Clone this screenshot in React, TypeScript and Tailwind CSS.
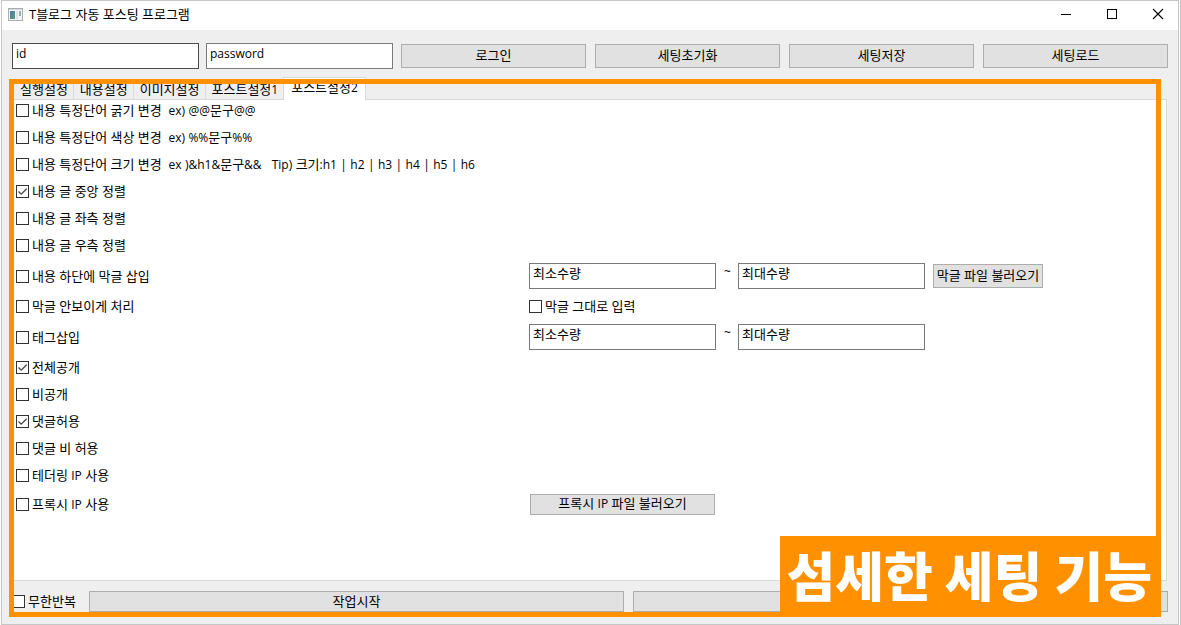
import { useState } from "react";
import type { ReactNode } from "react";

const TABS = ["실행설정", "내용설정", "이미지설정", "포스트설정1", "포스트설정2"];

// Latin runs are set a little smaller so they sit evenly next to the hangul
function Mixed({ text }: { text: string }) {
  return (
    <>
      {text.split(/([!-~]+)/).map((part, i) =>
        i % 2 === 1 ? (
          <span key={i} className="text-[12px]">
            {part}
          </span>
        ) : (
          part
        )
      )}
    </>
  );
}

function Check({ label, checked = false }: { label: string; checked?: boolean }) {
  return (
    <label className="relative flex items-center gap-[3px] whitespace-pre">
      <input
        type="checkbox"
        defaultChecked={checked}
        className="peer w-[13px] h-[13px] shrink-0 appearance-none border border-[#333333] bg-white"
      />
      <svg
        viewBox="0 0 13 13"
        className="absolute left-0 hidden w-[13px] h-[13px] pointer-events-none peer-checked:block"
      >
        <path d="M2.5 6.5 L5.2 9.2 L10.7 3.7" fill="none" stroke="#444444" strokeWidth="1.3" />
      </svg>
      <span className="pb-px">
        <Mixed text={label} />
      </span>
    </label>
  );
}

function Field({ value, label, className = "border-[#7a7a7a] pb-[7px]" }: { value: string; label: string; className?: string }) {
  return (
    <input
      type="text"
      aria-label={label}
      defaultValue={value}
      className={`min-w-0 h-[26px] border bg-white px-[3px] outline-none ${className}`}
    />
  );
}

function Button({ children, className = "" }: { children?: ReactNode; className?: string }) {
  return (
    <button
      type="button"
      className={`flex items-center justify-center border border-[#adadad] bg-[#e1e1e1] pb-[2px] whitespace-nowrap ${className}`}
    >
      {children}
    </button>
  );
}

function Row({ children, className = "h-[21px]" }: { children: ReactNode; className?: string }) {
  return <div className={`grid grid-cols-[45%_1fr] items-center ${className}`}>{children}</div>;
}

function Range({ name, children }: { name: string; children?: ReactNode }) {
  return (
    <div className="flex items-center gap-2">
      <div className="flex w-[187px] flex-col">
        <Field value="최소수량" label={`${name} 최소수량`} />
      </div>
      <span className="w-[6px] pb-2 text-[12px]">~</span>
      <div className="flex w-[187px] flex-col">
        <Field value="최대수량" label={`${name} 최대수량`} />
      </div>
      {children}
    </div>
  );
}

function TitleBar() {
  return (
    <header className="flex h-[29px] items-center justify-between bg-white pb-[3px] pl-[6px] pr-[14px]">
      <div className="flex items-center gap-[6px]">
        <svg viewBox="0 0 15 13" className="w-[15px] h-[13px]">
          <defs>
            <linearGradient id="pane" x1="0" y1="0" x2="1" y2="1">
              <stop offset="0" stopColor="#4a78b4" />
              <stop offset="1" stopColor="#55a277" />
            </linearGradient>
          </defs>
          <rect x="0.5" y="0.5" width="14" height="12" fill="#f4f4f4" stroke="#a9adb2" />
          <rect x="1" y="1" width="13" height="1" fill="#d5d9de" />
          <rect x="2" y="3" width="5" height="8" fill="url(#pane)" />
          <rect x="8" y="3" width="2" height="8" fill="#dfe3e6" />
          <rect x="11" y="3" width="2" height="5" fill="#8fb5a8" />
        </svg>
        <h1 className="pb-px">T블로그 자동 포스팅 프로그램</h1>
      </div>
      <div className="flex items-center gap-[34px]">
        <button type="button" aria-label="최소화">
          <svg viewBox="0 0 12 12" className="w-3 h-3" shapeRendering="crispEdges">
            <path d="M1 6.5H11" stroke="#000" />
          </svg>
        </button>
        <button type="button" aria-label="최대화">
          <svg viewBox="0 0 12 12" className="w-3 h-3" shapeRendering="crispEdges">
            <rect x="1.5" y="1.5" width="9" height="9" fill="none" stroke="#000" />
          </svg>
        </button>
        <button type="button" aria-label="닫기">
          <svg viewBox="0 0 12 12" className="w-3 h-3">
            <path d="M1 1L11 11M11 1L1 11" stroke="#000" strokeWidth="1.1" />
          </svg>
        </button>
      </div>
    </header>
  );
}

export default function App() {
  const [tab, setTab] = useState(4);

  return (
    <div className="flex min-h-screen border-r border-[#c6c6c6] bg-white px-px font-['Open_Sans','Noto_Sans_CJK_KR',sans-serif] text-[13px] leading-[18px] text-black">
      <div className="relative flex flex-1 flex-col border border-[#c6c6c6] bg-[#efefef]">
        <TitleBar />

        <div className="grid grid-cols-6 items-center gap-[7px] pt-[13px] pl-[10px] pr-[9px]">
          <Field value="id" label="id" className="border-[#4a4a4a] pb-[5px] text-[12px]" />
          <Field value="password" label="password" className="border-[#7a7a7a] pb-[5px] text-[12px]" />
          <Button className="mx-px h-6">로그인</Button>
          <Button className="mx-px h-6">세팅초기화</Button>
          <Button className="mx-px h-6">세팅저장</Button>
          <Button className="mx-px h-6">세팅로드</Button>
        </div>

        <div role="tablist" className="mt-2 flex h-[22px] items-end pl-3">
          {TABS.map((name, i) => (
            <button
              key={name}
              type="button"
              role="tab"
              aria-selected={tab === i}
              onClick={() => setTab(i)}
              className={
                tab === i
                  ? "relative z-10 -mb-px -ml-px flex h-[23px] items-center border border-b-0 border-[#d9d9d9] bg-white px-[7px] pb-[3px]"
                  : "flex h-5 items-center border-r border-[#d9d9d9] pr-[5px] pl-[6px]"
              }
            >
              <span>
                <Mixed text={name} />
              </span>
            </button>
          ))}
        </div>

        <main className="ml-[9px] mr-[11px] flex flex-1 flex-col gap-[6px] border border-[#d9d9d9] bg-white pl-1 pr-[10px]">
          <Row>
            <Check label="내용 특정단어 굵기 변경  ex) @@문구@@" />
          </Row>
          <Row>
            <Check label="내용 특정단어 색상 변경  ex) %%문구%%" />
          </Row>
          <Row>
            <Check label="내용 특정단어 크기 변경  ex )&h1&문구&&   Tip) 크기:h1 | h2 | h3 | h4 | h5 | h6" />
          </Row>
          <Row>
            <Check label="내용 글 중앙 정렬" checked />
          </Row>
          <Row>
            <Check label="내용 글 좌측 정렬" />
          </Row>
          <Row>
            <Check label="내용 글 우측 정렬" />
          </Row>
          <Row className="h-7">
            <Check label="내용 하단에 막글 삽입" />
            <Range name="막글">
              <Button className="h-6 w-[110px]">막글 파일 불러오기</Button>
            </Range>
          </Row>
          <Row>
            <Check label="막글 안보이게 처리" />
            <Check label="막글 그대로 입력" />
          </Row>
          <Row className="h-7">
            <Check label="태그삽입" />
            <Range name="태그" />
          </Row>
          <Row>
            <Check label="전체공개" checked />
          </Row>
          <Row>
            <Check label="비공개" />
          </Row>
          <Row>
            <Check label="댓글허용" checked />
          </Row>
          <Row>
            <Check label="댓글 비 허용" />
          </Row>
          <Row>
            <Check label="테더링 IP 사용" />
          </Row>
          <Row className="h-[25px]">
            <Check label="프록시 IP 사용" />
            <Button className="mx-px h-[21px] w-[185px]">
              <span>
                <Mixed text="프록시 IP 파일 불러오기" />
              </span>
            </Button>
          </Row>
        </main>

        <footer className="flex items-center gap-[9px] px-[10px] pt-[10px] pb-3">
          <div className="w-[68px]">
            <Check label="무한반복" />
          </div>
          <Button className="h-[21px] flex-1">작업시작</Button>
          <Button className="h-[21px] flex-1" />
        </footer>

        <div className="pointer-events-none absolute top-[78px] right-[17px] bottom-[7px] left-[7px] z-20 border-[5px] border-[#ff9100]">
          <p className="absolute right-0 bottom-0 flex h-[76px] items-center bg-[#ff9100] pl-[6px] pr-1 font-['Noto_Sans_CJK_KR',sans-serif] text-[53px] leading-[76px] font-black whitespace-nowrap text-white">
            섬세한 세팅 기능
          </p>
        </div>
      </div>
    </div>
  );
}
